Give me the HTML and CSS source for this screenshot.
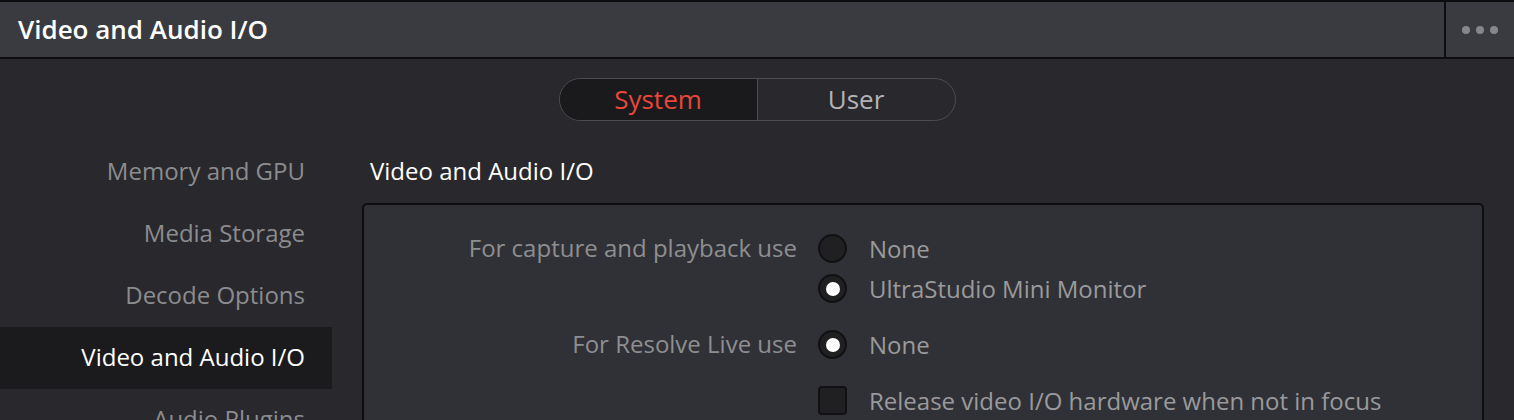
FILE: index.html
```html
<!DOCTYPE html>
<html lang="en">
<head>
<meta charset="utf-8">
<title>Video and Audio I/O</title>
<link rel="stylesheet" href="styles.css">
</head>
<body>
<div class="app">
  <header class="titlebar">
    <div class="title">Video and Audio I/O</div>
    <div class="menu-btn"><span class="dot"></span><span class="dot"></span><span class="dot"></span></div>
  </header>
  <div class="tabs-row">
    <div class="segmented">
      <div class="seg seg-active">System</div>
      <div class="seg">User</div>
    </div>
  </div>
  <div class="content">
    <nav class="sidebar">
      <div class="nav-item">Memory and GPU</div>
      <div class="nav-item">Media Storage</div>
      <div class="nav-item">Decode Options</div>
      <div class="nav-item nav-selected">Video and Audio I/O</div>
      <div class="nav-item">Audio Plugins</div>
    </nav>
    <main class="main">
      <div class="section-title">Video and Audio I/O</div>
      <div class="panel">
        <div class="group">
          <div class="label">For capture and playback use</div>
          <div class="options">
            <div class="option"><span class="radio"></span><span class="opt-text">None</span></div>
            <div class="option"><span class="radio radio-on"></span><span class="opt-text">UltraStudio Mini Monitor</span></div>
          </div>
        </div>
        <div class="group">
          <div class="label">For Resolve Live use</div>
          <div class="options">
            <div class="option"><span class="radio radio-on"></span><span class="opt-text">None</span></div>
          </div>
        </div>
        <div class="group">
          <div class="label"></div>
          <div class="options">
            <div class="option"><span class="checkbox"></span><span class="opt-text">Release video I/O hardware when not in focus</span></div>
          </div>
        </div>
      </div>
    </main>
  </div>
</div>
</body>
</html>
```
FILE: styles.css
```css
html, body {
  margin: 0;
  padding: 0;
  height: 420px;
  overflow: hidden;
  background: #28282d;
  font-family: "Open Sans", "Noto Sans", sans-serif;
}
.app {
  border-top: 2px solid #0d0d0f;
}
.titlebar {
  display: flex;
  height: 55px;
  background: #3a3b40;
  border-bottom: 2px solid #0d0d0f;
}
.title {
  flex: 1;
  padding-left: 18px;
  font-size: 26px;
  font-weight: 600;
  color: #ffffff;
  line-height: 55px;
}
.menu-btn {
  width: 68px;
  border-left: 2px solid #0d0d0f;
  display: flex;
  align-items: center;
  justify-content: center;
  gap: 6px;
}
.dot {
  width: 8px;
  height: 8px;
  border-radius: 50%;
  background: #86878b;
}
.tabs-row {
  display: flex;
  justify-content: center;
  padding-top: 19px;
}
.segmented {
  display: flex;
  width: 395px;
  height: 41px;
  border: 1px solid #4c4d52;
  border-radius: 22px;
  overflow: hidden;
}
.seg {
  flex: 1;
  text-align: center;
  line-height: 41px;
  font-size: 26px;
  color: #b4b4b6;
}
.seg-active {
  background: #1a1a1d;
  color: #e8473a;
  border-right: 1px solid #4c4d52;
}
.content {
  display: flex;
  padding-top: 20px;
}
.sidebar {
  width: 332px;
  flex: none;
}
.nav-item {
  height: 62px;
  line-height: 60px;
  text-align: right;
  padding-right: 27px;
  font-size: 24px;
  color: #8c8c8e;
}
.nav-selected {
  background: #1b1b1e;
  color: #ffffff;
}
.main {
  flex: 1;
  padding-left: 30px;
  padding-right: 30px;
}
.section-title {
  height: 62px;
  line-height: 60px;
  padding-left: 8px;
  font-size: 24px;
  color: #ffffff;
}
.panel {
  background: #303136;
  border: 2px solid #0e0e10;
  border-radius: 5px;
  padding-top: 29px;
  height: 400px;
  display: flex;
  flex-direction: column;
  gap: 27px;
}
.group {
  display: flex;
}
.label {
  width: 433px;
  flex: none;
  text-align: right;
  line-height: 27px;
  font-size: 24px;
  color: #8e8e90;
}
.options {
  display: flex;
  flex-direction: column;
  gap: 11px;
  padding-left: 21px;
}
.option {
  display: flex;
  align-items: center;
  height: 29px;
}
.radio {
  box-sizing: border-box;
  width: 29px;
  height: 29px;
  border-radius: 50%;
  background: #202023;
  border: 2px solid #111113;
  display: flex;
  align-items: center;
  justify-content: center;
  flex: none;
}
.radio-on::after {
  content: "";
  width: 14px;
  height: 14px;
  border-radius: 50%;
  background: #ffffff;
}
.checkbox {
  box-sizing: border-box;
  width: 29px;
  height: 29px;
  border-radius: 4px;
  background: #202023;
  border: 2px solid #111113;
  flex: none;
}
.opt-text {
  padding-left: 22px;
  font-size: 24px;
  line-height: 27px;
  color: #9a9a9c;
  white-space: nowrap;
}
```
